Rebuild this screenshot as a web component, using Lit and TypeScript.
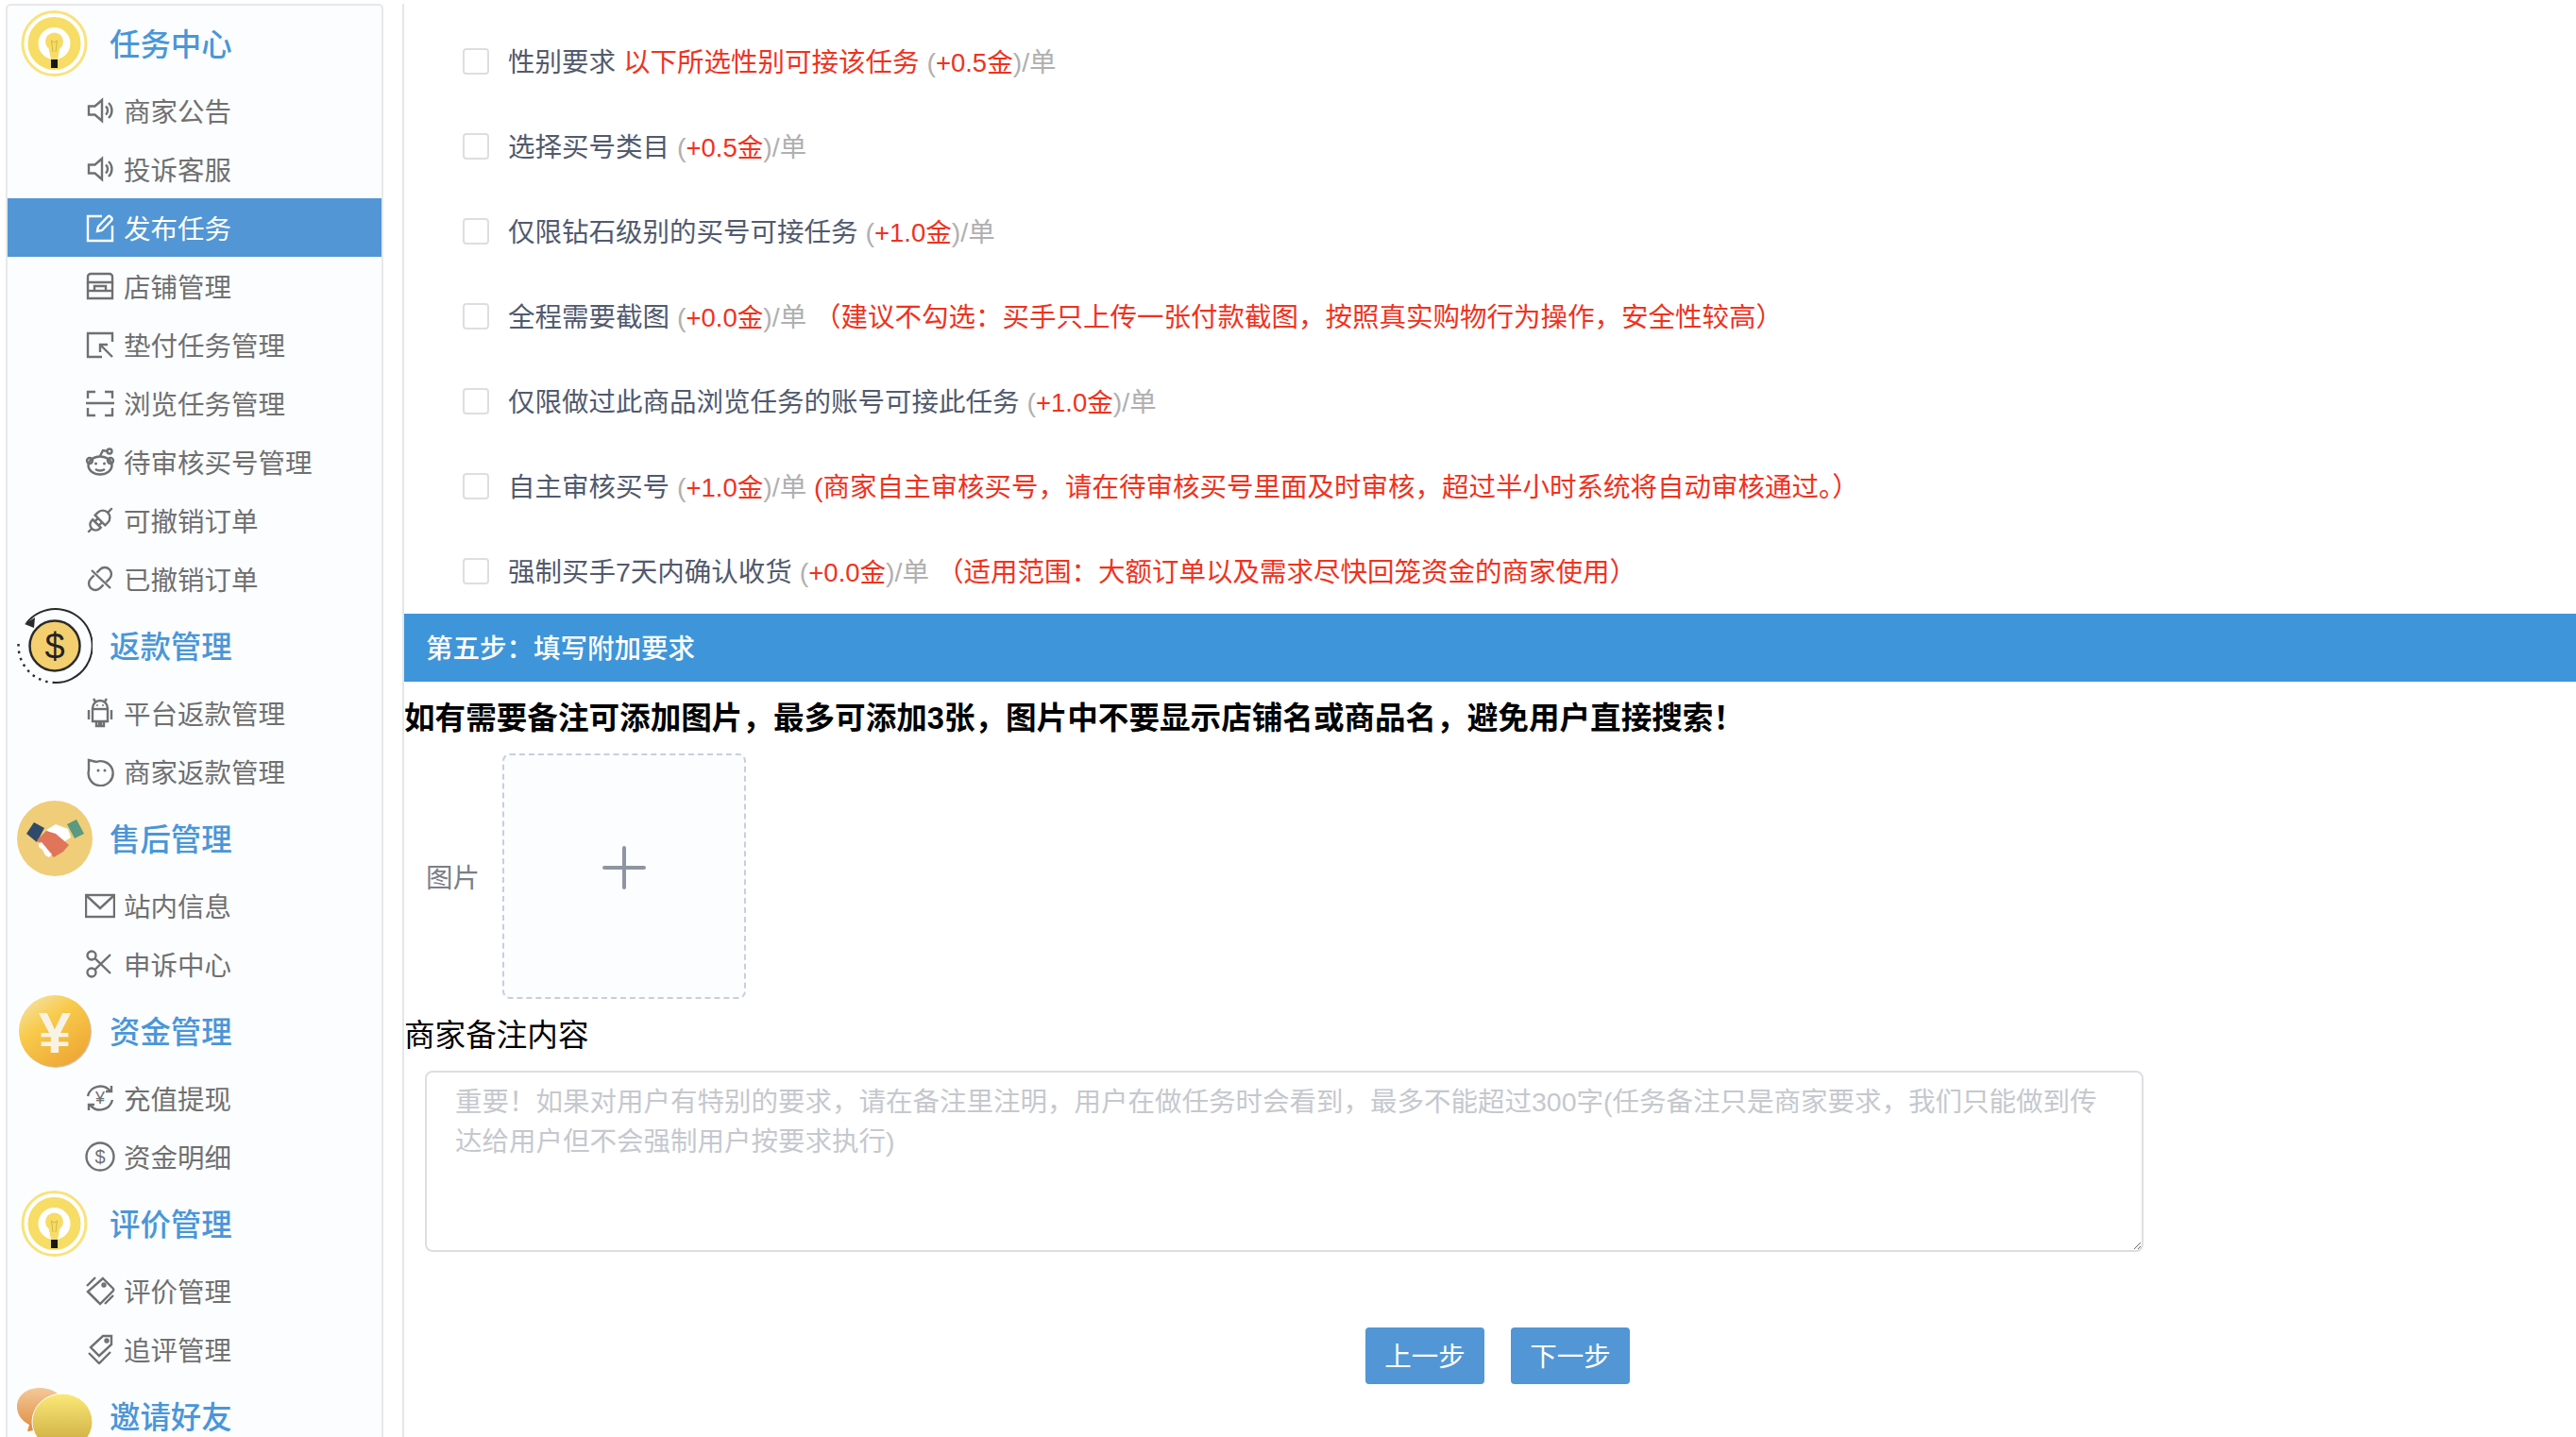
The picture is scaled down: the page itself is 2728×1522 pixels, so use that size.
import { LitElement, html, css, svg, TemplateResult } from "lit";
import { customElement } from "lit/decorators.js";

const line = (d: string) => svg`<path d=${d}></path>`;
const icons: Record<string, TemplateResult> = {
  speaker: svg`${line("M4 11.500h6.500L18 5v22l-7.500-6.500H4z")}${line("M22 11.500a6 6 0 0 1 0 9")}${line("M25 8a11 11 0 0 1 0 16")}`,
  edit: svg`${line("M18 4H3v26h26V14")}${line("M13 20l1-5L24 4.500a2 2 0 0 1 3 0l1 1a2 2 0 0 1 0 3L18 19z")}`,
  store: svg`${line("M6 3h20a3 3 0 0 1 3 3v6H3V6a3 3 0 0 1 3-3z")}${line("M3 12v17h26V12")}${line("M3 21h26")}${line("M10 21v-5h12v5")}`,
  corner: svg`${line("M29 13V4H3v25h15")}${line("M29 29L17 17")}${line("M16 24v-8h8")}`,
  scan: svg`${line("M3 11V4h8M21 4h8v7M1 16h30M3 21v8h8M21 29h8v-8")}`,
  reddit: svg`<ellipse cx="16" cy="20" rx="12.500" ry="9.500"></ellipse><circle cx="5" cy="15" r="3"></circle><circle cx="27" cy="15" r="3"></circle><circle cx="26" cy="5" r="2.500"></circle>${line("M16 10l3-6 5 1")}${line("M11 24q5 3 10 0")}<circle class="f" cx="11.500" cy="18" r="1.500"></circle><circle class="f" cx="20.500" cy="18" r="1.500"></circle>`,
  plug: svg`<g transform="rotate(-45 16 16)">${line("M-2 16h6")}${line("M11 10H9.500a6 6 0 0 0 0 12H11z")}${line("M11 13h5M11 19h5")}${line("M16 8.500h4a7.500 7.500 0 0 1 0 15h-4z")}${line("M27.500 16H34")}</g>`,
  unlink: svg`<g transform="rotate(-45 16 16)"><path d="M14 9H9a7 7 0 0 0 0 14h5"></path><path d="M18 9h5a7 7 0 0 1 0 14h-5"></path></g>${line("M7 7l20 19")}`,
  android: svg`${line("M8 11a8 8 0 0 1 16 0v14H8z")}${line("M8 12h16")}${line("M4 13v10M28 13v10")}${line("M12 25v5h3v-5M17 25v5h3v-5")}${line("M11 4L9 1M21 4l2-3")}<circle class="f" cx="13" cy="8" r="1"></circle><circle class="f" cx="19" cy="8" r="1"></circle>`,
  face: svg`${line("M4 4l8 2a13 13 0 1 1-8 9z")}<circle class="f" cx="14" cy="15" r="1.500"></circle><circle class="f" cx="21" cy="15" r="1.500"></circle>`,
  mail: svg`<rect x="1" y="5" width="30" height="23"></rect>${line("M2 6l14 13L30 6")}`,
  scissors: svg`<circle cx="7" cy="7" r="4.500"></circle><circle cx="7" cy="25" r="4.500"></circle>${line("M10.500 10L27 26M10.500 22L27 6")}`,
  yuan: svg`${line("M3 14a13.500 13.500 0 0 1 24-5")}${line("M29 18a13.500 13.500 0 0 1-24 5")}${line("M28 3v6h-6M4 29v-6h6")}<text class="g" x="16" y="22" text-anchor="middle" font-size="18">¥</text>`,
  dollar: svg`<circle cx="16" cy="16" r="14.500"></circle><text class="g" x="16" y="23" text-anchor="middle" font-size="20">$</text>`,
  tag: svg`${line("M19 3l11 11a2 2 0 0 1 0 2L16 30 3 17z")}${line("M3 17l11 11")}${line("M2 11l9-9M21 30l9-9")}<circle cx="20" cy="10" r="1.500"></circle>`,
  tags: svg`${line("M19 2h9v9L15 23 6 14z")}<circle cx="23" cy="7" r="1.500"></circle>${line("M4 20l11 11 12-12")}`,
};

const bulb = svg`<svg viewBox="0 0 80 80" width="80" height="80">
  <circle cx="39.500" cy="40" r="33.500" fill="#fff" stroke="#f9e27e" stroke-width="3"></circle>
  <circle cx="39.500" cy="40" r="22.500" fill="#fff" stroke="#f7dc66" stroke-width="11"></circle>
  <circle cx="39.500" cy="38" r="9.500" fill="#f7dc66"></circle>
  <path d="M33 42h13l-3 15h-7z" fill="#f7dc66"></path>
  <path d="M36.500 37l1.500 12M42.500 37l-1.500 12M36.500 37l3 2 3-2" stroke="#c9ac3c" stroke-width="0.800" fill="none"></path>
  <rect x="36" y="57" width="7" height="9" fill="#1a1813"></rect>
</svg>`;
const coin = svg`<svg viewBox="0 0 80 80" width="80" height="80">
  <path d="M10 16A39 39 0 1 1 40 79" fill="none" stroke="#2b2b2b" stroke-width="2"></path>
  <path d="M40 79A39 39 0 0 1 2 34" fill="none" stroke="#2b2b2b" stroke-width="2.500" stroke-dasharray="2.500 5"></path>
  <path d="M8 17l11-7-1 11z" fill="#2b2b2b"></path>
  <circle cx="40" cy="40" r="26.500" fill="#f3cf6f" stroke="#2b2b2b" stroke-width="2.500"></circle>
  <text x="40" y="54" text-anchor="middle" font-size="38" fill="#222" font-family="Liberation Sans">$</text>
</svg>`;
const shake = svg`<svg viewBox="0 0 80 80" width="80" height="80">
  <circle cx="40" cy="40" r="40" fill="#f0cd78"></circle>
  <path d="M10 35l8-12 11 6-8 15z" fill="#2f4a6a"></path>
  <path d="M53 25l10-5 8 15-10 5z" fill="#5a9a80"></path>
  <path d="M31 31l10-6 13 5 3 9-8 5z" fill="#fff"></path>
  <path d="M21 42l10-10 10 3 14 12-6 7-10 6-6-6z" fill="#e0755a"></path>
  <path d="M23 45l3-1 11 13-3 3-4-2-3-6-4-3z" fill="#fff"></path>
</svg>`;
const yen = svg`<svg viewBox="0 0 80 80" width="80" height="80">
  <defs><linearGradient id="yg" x1="0.150" y1="0" x2="0.850" y2="1"><stop offset="0" stop-color="#f5e2a6"></stop><stop offset="0.350" stop-color="#f8cb4c"></stop><stop offset="1" stop-color="#eda332"></stop></linearGradient></defs>
  <circle cx="41" cy="41" r="38" fill="#cfc4ae"></circle>
  <circle cx="40" cy="40" r="38" fill="url(#yg)"></circle>
  <text x="40" y="63" text-anchor="middle" font-size="62" font-weight="700" fill="#f8f3e6" font-family="Liberation Sans">¥</text>
</svg>`;
const chat = svg`<svg viewBox="0 0 80 80" width="80" height="80">
  <defs>
    <linearGradient id="c1" x1="0" y1="0" x2="0" y2="1"><stop offset="0" stop-color="#f3c99a"></stop><stop offset="1" stop-color="#e08a3e"></stop></linearGradient>
    <linearGradient id="c2" x1="0" y1="0" x2="0" y2="1"><stop offset="0" stop-color="#fbe978"></stop><stop offset="1" stop-color="#c9a63c"></stop></linearGradient>
  </defs>
  <path d="M24 10c15 0 27 9 27 21s-12 20-27 20c-3 0-6 5-13 5l2-7C5 45 0 38 0 30 0 19 9 10 24 10z" fill="url(#c1)"></path>
  <ellipse cx="48" cy="46" rx="32" ry="30" fill="url(#c2)" stroke="#fff" stroke-width="1"></ellipse>
</svg>`;

type Item = { icon: string; text: string; active?: boolean };
type Group = { img: TemplateResult; title: string; items: Item[] };
const groups: Group[] = [
  { img: bulb, title: "任务中心", items: [
    { icon: "speaker", text: "商家公告" }, { icon: "speaker", text: "投诉客服" },
    { icon: "edit", text: "发布任务", active: true }, { icon: "store", text: "店铺管理" },
    { icon: "corner", text: "垫付任务管理" }, { icon: "scan", text: "浏览任务管理" },
    { icon: "reddit", text: "待审核买号管理" }, { icon: "plug", text: "可撤销订单" },
    { icon: "unlink", text: "已撤销订单" } ] },
  { img: coin, title: "返款管理", items: [ { icon: "android", text: "平台返款管理" }, { icon: "face", text: "商家返款管理" } ] },
  { img: shake, title: "售后管理", items: [ { icon: "mail", text: "站内信息" }, { icon: "scissors", text: "申诉中心" } ] },
  { img: yen, title: "资金管理", items: [ { icon: "yuan", text: "充值提现" }, { icon: "dollar", text: "资金明细" } ] },
  { img: bulb, title: "评价管理", items: [ { icon: "tag", text: "评价管理" }, { icon: "tags", text: "追评管理" } ] },
  { img: chat, title: "邀请好友", items: [] },
];

type Row = { label: string; lead?: string; price: string; note?: string };
const rows: Row[] = [
  { label: "性别要求", lead: "以下所选性别可接该任务", price: "+0.5金" },
  { label: "选择买号类目", price: "+0.5金" },
  { label: "仅限钻石级别的买号可接任务", price: "+1.0金" },
  { label: "全程需要截图", price: "+0.0金", note: "（建议不勾选：买手只上传一张付款截图，按照真实购物行为操作，安全性较高）" },
  { label: "仅限做过此商品浏览任务的账号可接此任务", price: "+1.0金" },
  { label: "自主审核买号", price: "+1.0金", note: "(商家自主审核买号，请在待审核买号里面及时审核，超过半小时系统将自动审核通过。）" },
  { label: "强制买手7天内确认收货", price: "+0.0金", note: "（适用范围：大额订单以及需求尽快回笼资金的商家使用）" },
];

@customElement("app-root")
export class AppRoot extends LitElement {
  static styles = css`
    :host {
      display: flex; width: 2728px; height: 1522px; overflow: hidden; box-sizing: border-box;
      padding-top: 4px; background: #fff;
      font-family: "Liberation Sans", "Noto Sans CJK SC", sans-serif;
    }
    .side {
      width: 400px; margin-left: 6px; flex: none; box-sizing: border-box; height: 1600px;
      background: #fbfdff; border: 2px solid #e8e8e8; border-radius: 5px;
    }
    .head { display: flex; align-items: center; height: 80px; padding-left: 10px; gap: 18px; }
    .head svg { flex: none; }
    .head span { font-size: 32.400px; color: #4a96d8; font-weight: 500; padding-bottom: 3px; }
    .item { display: flex; align-items: center; height: 62px; padding-left: 82px; gap: 9px; color: #707070; font-size: 28.500px; }
    .item span { padding-bottom: 2px; }
    .item.active { background: #5296d5; color: #fff; }
    .ico { width: 32px; height: 32px; flex: none; fill: none; stroke: currentColor; stroke-width: 2.400; }
    .ico .f { fill: currentColor; stroke: none; }
    .ico .g { fill: currentColor; stroke: none; font-family: "Liberation Sans", sans-serif; }
    .main { flex: 1; margin-left: 20px; border-left: 2px solid #e6e6e6; padding-top: 16px; min-width: 0; }
    .row { display: flex; align-items: center; height: 90px; box-sizing: border-box; padding: 0 0 3px 62px; gap: 20px; font-size: 28.500px; white-space: pre; }
    .cb { width: 28px; height: 28px; box-sizing: border-box; border: 2px solid #dcdee2; border-radius: 4px; background: #fff; flex: none; margin-top: 3px; }
    .lab { color: #515a6e; }
    .gray { color: #b0b0b0; }
    .red { color: #f0321e; }
    .price { font-size: 27.500px; }
    .bar { height: 72px; box-sizing: border-box; display: flex; align-items: center; padding: 0 0 3px 23px; background: #3f95d9; color: #fff; font-size: 28.500px; font-weight: 500; }
    .tip { margin: 15px 0 13px 0; font-size: 32.600px; line-height: 48px; font-weight: 700; color: #000; }
    .up { display: flex; align-items: center; padding-left: 23px; gap: 24px; font-size: 28.500px; color: #7a7f88; }
    .up > span { padding-bottom: 2px; }
    .box { width: 258px; height: 260px; box-sizing: border-box; border: 2px dashed #c7cfdb; border-radius: 8px; background: #fbfdff; display: flex; justify-content: center; padding-top: 96px; }
    .plus { width: 46px; height: 46px; }
    .plus path { stroke: #8e95a1; stroke-width: 4; stroke-linecap: round; }
    .note { margin: 15px 0 13px 0; font-size: 32.600px; line-height: 48px; color: #000; }
    textarea {
      display: block; margin-left: 22px; width: 1820px; height: 192px; box-sizing: border-box;
      border: 2px solid #dcdee2; border-radius: 8px; padding: 10px 40px 0 30px; outline: none;
      font: inherit; font-size: 28.500px; line-height: 42px; color: #515a6e; background: #fff;
    }
    textarea::placeholder { color: #c5c8ce; opacity: 1; }
    .btns { display: flex; gap: 28px; margin: 80px 0 0 1018px; }
    .btn { width: 126px; height: 60px; box-sizing: border-box; padding-bottom: 3px; display: flex; align-items: center; justify-content: center; background: #5296d5; color: #fff; font-size: 28.500px; border-radius: 4px; }
  `;

  render() {
    return html`
      <aside class="side">
        ${groups.map((g) => html`
          <div class="head">${g.img}<span>${g.title}</span></div>
          ${g.items.map((i) => html`
            <div class="item ${i.active ? "active" : ""}">
              <svg class="ico" viewBox="0 0 32 32">${icons[i.icon]}</svg><span>${i.text}</span>
            </div>`)}
        `)}
      </aside>
      <main class="main">
        ${rows.map((r) => html`
          <div class="row">
            <span class="cb"></span>
            <span><span class="lab">${r.label} </span>${r.lead ? html`<span class="red">${r.lead} </span>` : ""}<span class="gray">(</span><span class="red price">${r.price}</span><span class="gray">)/单</span>${r.note ? html`<span class="red"> ${r.note}</span>` : ""}</span>
          </div>`)}
        <div class="bar">第五步：填写附加要求</div>
        <div class="tip">如有需要备注可添加图片，最多可添加3张，图片中不要显示店铺名或商品名，避免用户直接搜索！</div>
        <div class="up">
          <span>图片</span>
          <div class="box"><svg class="plus" viewBox="0 0 46 46"><path d="M23 2v42M2 23h42"></path></svg></div>
        </div>
        <div class="note">商家备注内容</div>
        <textarea placeholder="重要！如果对用户有特别的要求，请在备注里注明，用户在做任务时会看到，最多不能超过300字(任务备注只是商家要求，我们只能做到传达给用户但不会强制用户按要求执行)"></textarea>
        <div class="btns"><div class="btn">上一步</div><div class="btn">下一步</div></div>
      </main>
    `;
  }
}
